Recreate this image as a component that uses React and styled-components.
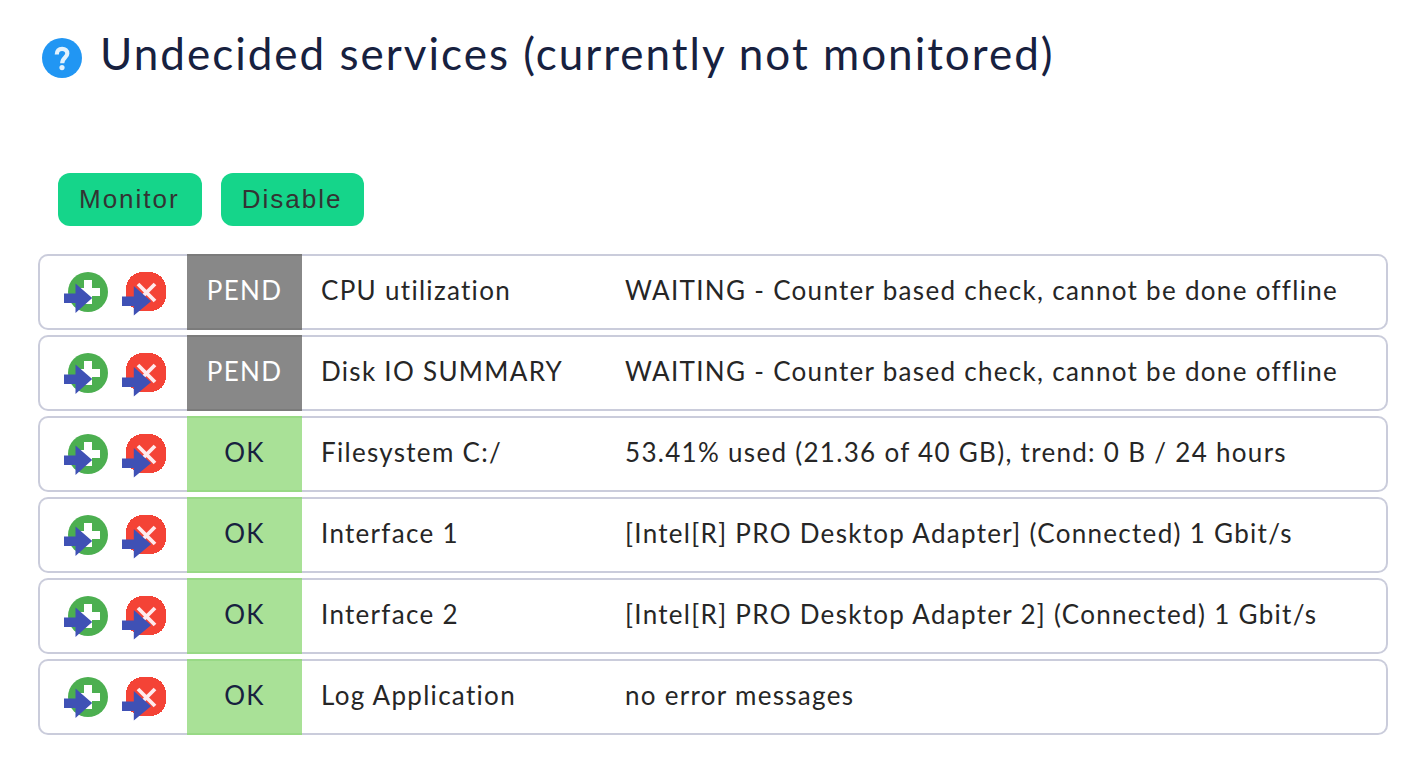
import React from "react";
import styled, { createGlobalStyle } from "styled-components";

const GlobalStyle = createGlobalStyle`
  * { box-sizing: border-box; }
  body {
    margin: 0;
    background: #fff;
    color: #262626;
    font: 26px/32px Lato, sans-serif;
    letter-spacing: 0.05em;
  }
`;

const Page = styled.main`
  padding: 25px 38px 32px;
`;

const Header = styled.header`
  display: flex;
  align-items: center;
  gap: 18px;
  padding-left: 4px;
`;

const HelpButton = styled.button`
  display: flex;
  flex: none;
  margin-top: 10px;
  padding: 0;
  border: 0;
  background: none;
  cursor: pointer;
`;

const Title = styled.h1`
  margin: 0;
  color: #17213f;
  font-size: 44px;
  font-weight: 400;
  line-height: 56px;
  letter-spacing: 2px;
`;

const Actions = styled.div`
  display: flex;
  gap: 19px;
  margin: 92px 20px 23px;
`;

const ActionButton = styled.button`
  height: 53px;
  padding: 0 22px 2px 21px;
  border: 0;
  border-radius: 12px;
  background: #15d58a;
  color: #333;
  font: 26px/32px "Liberation Sans", sans-serif;
  letter-spacing: 2px;
  cursor: pointer;
`;

const Services = styled.table`
  width: 100%;
  border-collapse: separate;
  border-spacing: 0 5px;
`;

const Cell = styled.td`
  height: 76px;
  padding: 0 0 4px 19px;
  border: 2px solid #caccdb;
  border-width: 2px 0;
  white-space: nowrap;
`;

const IconCell = styled(Cell)`
  width: 149px;
  padding: 0 0 0 24px;
  border-left-width: 2px;
  border-radius: 10px 0 0 10px;
`;

const NameCell = styled(Cell)`
  width: 304px;
`;

const OutputCell = styled(Cell)`
  border-right-width: 2px;
  border-radius: 0 10px 10px 0;
`;

const StateCell = styled(Cell)`
  width: 115px;
  padding-left: 0;
  text-align: center;
  border-color: ${(p) => (p.$pending ? "#7b7b7b" : "#98d985")};
  background: ${(p) => (p.$pending ? "#888" : "#a9e197")};
  color: ${(p) => (p.$pending ? "#fff" : "#17213f")};
`;

const IconGroup = styled.div`
  display: flex;
  gap: 12px;
`;

const IconButton = styled.button`
  display: flex;
  padding: 0;
  border: 0;
  background: none;
  cursor: pointer;
`;

const HelpIcon = () => (
  <svg width="40" height="40" viewBox="0 0 40 40" aria-hidden="true">
    <circle cx="20" cy="20" r="20" fill="#2196f3" />
    <path
      d="M14.8 16.4C14.8 12.7 16.9 10.8 20.1 10.8C23.3 10.8 25.3 12.6 25.3 15.4C25.3 19.4 20.2 19.6 20.2 25.2"
      fill="none"
      stroke="#e3f2fd"
      strokeWidth="4.2"
    />
    <circle cx="20" cy="29.6" r="2.6" fill="#e3f2fd" />
  </svg>
);

const MonitorIcon = () => (
  <svg width="46" height="46" viewBox="0 0 46 46" aria-hidden="true">
    <circle cx="24" cy="23" r="20" fill="#4caf50" />
    <path d="M20 11h8v8h8v8h-8v8h-8v-8h-8v-8h8z" fill="#fff" />
    <path d="M0 24.5h11.5v-10L28.2 29 11.5 44V34H0z" fill="#3f51b5" />
  </svg>
);

const DisableIcon = () => (
  <svg width="46" height="47" viewBox="0 0 46 47" aria-hidden="true">
    <path
      d="M17 3h14v1h3v1h2v1h1v1h2v1h1v2h1v1h1v2h1v3h1v14h-1v3h-1v2h-1v1h-1v2h-2v1h-1v1h-2v1h-3v1H17v-1h-3v-1h-2v-1h-1v-1H9v-2H8v-1H7v-2H6v-3H4V16h1v-3h1v-2h1v-1h1V8h1V7h2V6h1V5h2V4h3z"
      fill="#f44336"
    />
    <path d="M16 15l17 17M33 15L16 32" stroke="#ffebee" strokeWidth="3.8" />
    <path d="M0 27.5h11.8V17L29 32.3 11.8 46.6V37H0z" fill="#3f51b5" />
  </svg>
);

const waiting = "WAITING - Counter based check, cannot be done offline";

const services = [
  { state: "PEND", name: "CPU utilization", output: waiting },
  { state: "PEND", name: "Disk IO SUMMARY", output: waiting },
  {
    state: "OK",
    name: "Filesystem C:/",
    output: "53.41% used (21.36 of 40 GB), trend: 0 B / 24 hours",
  },
  {
    state: "OK",
    name: "Interface 1",
    output: "[Intel[R] PRO Desktop Adapter] (Connected) 1 Gbit/s",
  },
  {
    state: "OK",
    name: "Interface 2",
    output: "[Intel[R] PRO Desktop Adapter 2] (Connected) 1 Gbit/s",
  },
  { state: "OK", name: "Log Application", output: "no error messages" },
];

export default function App() {
  return (
    <Page>
      <GlobalStyle />
      <Header>
        <HelpButton type="button" aria-label="Help">
          <HelpIcon />
        </HelpButton>
        <Title>Undecided services (currently not monitored)</Title>
      </Header>
      <Actions>
        <ActionButton type="button">Monitor</ActionButton>
        <ActionButton type="button">Disable</ActionButton>
      </Actions>
      <Services>
        <tbody>
          {services.map(({ state, name, output }) => (
            <tr key={name}>
              <IconCell>
                <IconGroup>
                  <IconButton type="button" aria-label={`Monitor ${name}`}>
                    <MonitorIcon />
                  </IconButton>
                  <IconButton type="button" aria-label={`Disable ${name}`}>
                    <DisableIcon />
                  </IconButton>
                </IconGroup>
              </IconCell>
              <StateCell $pending={state === "PEND"}>{state}</StateCell>
              <NameCell>{name}</NameCell>
              <OutputCell>{output}</OutputCell>
            </tr>
          ))}
        </tbody>
      </Services>
    </Page>
  );
}
